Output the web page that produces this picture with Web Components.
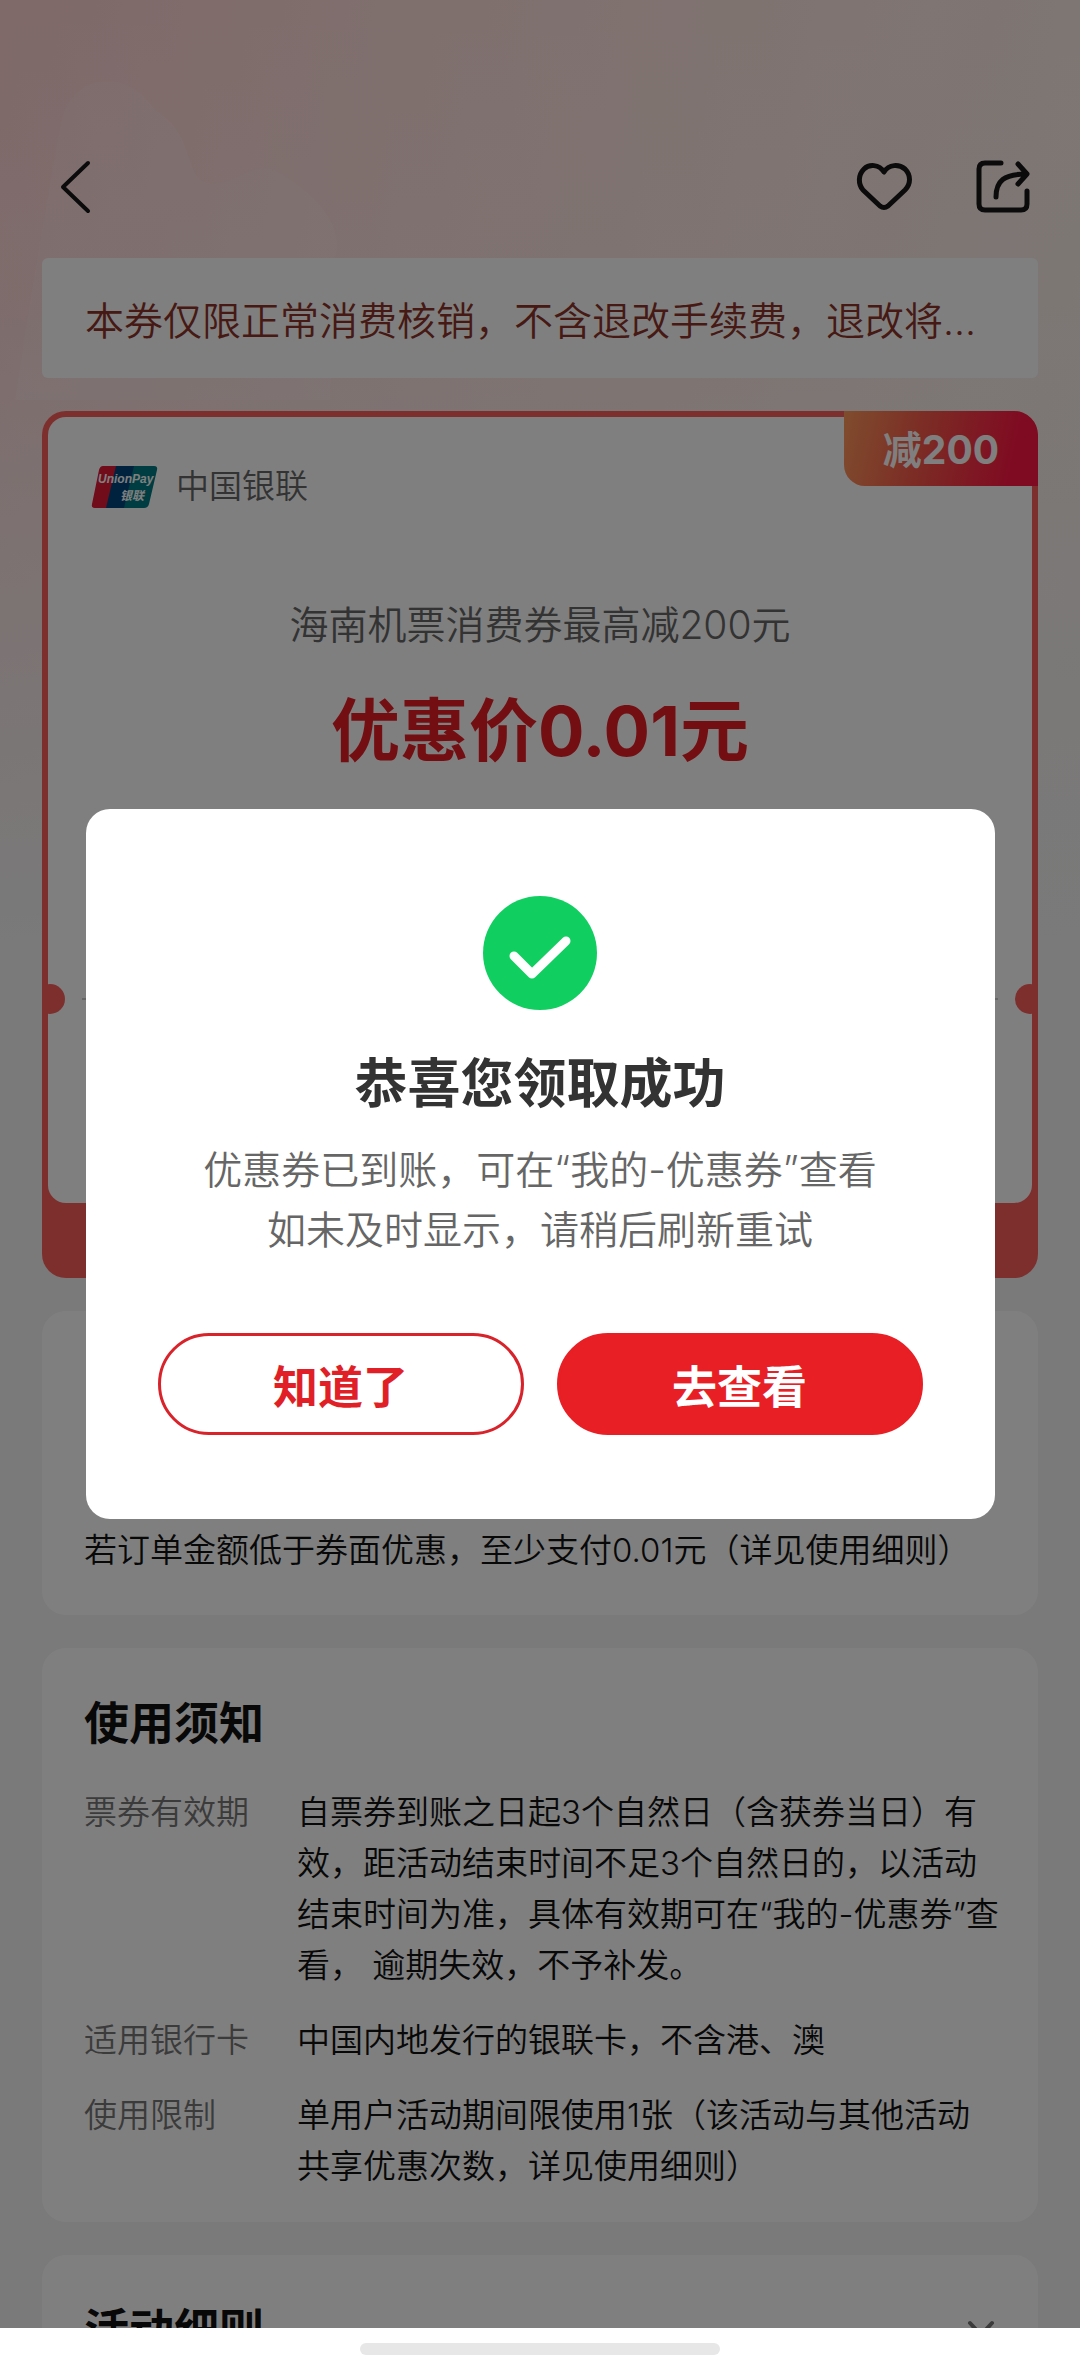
<!DOCTYPE html>
<html lang="zh-CN">
<head>
<meta charset="utf-8">
<meta name="viewport" content="width=device-width, initial-scale=1">
<title>优惠券</title>
<style>
    html, body {
        height: 100%;
        margin: 0;
    }
    body {
        font-family: Inter, "Noto Sans CJK SC", sans-serif;
        font-size: 33px;
        font-weight: 350;
        line-height: 51px;
        color: #111;
    }
</style>
</head>
<body>

<app-screen>
    <page-header></page-header>
    <notice-bar>本券仅限正常消费核销，不含退改手续费，退改将...</notice-bar>
    <coupon-ticket tag="减200">
        <span slot="brand">中国银联</span>
        <span slot="name">海南机票消费券最高减200元</span>
        <span slot="price">优惠价0.01元</span>
    </coupon-ticket>
    <info-card class="rule">若订单金额低于券面优惠，至少支付0.01元（详见使用细则）</info-card>
    <info-card heading="使用须知">
        <info-row label="票券有效期">自票券到账之日起3个自然日（含获券当日）有效，距活动结束时间不足3个自然日的，以活动结束时间为准，具体有效期可在“我的-优惠券”查看， 逾期失效，不予补发。</info-row>
        <info-row label="适用银行卡">中国内地发行的银联卡，不含港、澳</info-row>
        <info-row label="使用限制">单用户活动期间限使用1张（该活动与其他活动共享优惠次数，详见使用细则）</info-row>
    </info-card>
    <info-card heading="活动细则" collapsed></info-card>

    <success-dialog slot="dialog" heading="恭喜您领取成功">
        优惠券已到账，可在“我的-优惠券”查看<br>如未及时显示，请稍后刷新重试
    </success-dialog>
</app-screen>

<script>

// screen: scrolling page, mask with the dialog, system bar at the bottom
class AppScreen extends HTMLElement {
    constructor(){
        super();
        this.attachShadow({ mode: 'open' });
        this.shadowRoot.innerHTML = `
        <style>
            :host{
                display: flex;
                flex-direction: column;
                height: 100vh;
                overflow: hidden;
            }
            .view{
                flex: 1;
                min-height: 0;
                position: relative;
                overflow: hidden;
                background:
                    linear-gradient(180deg, rgba(244,244,244,0) 0, rgba(244,244,244,0.15) 300px, #f4f4f4 940px),
                    linear-gradient(102deg, #ffd2d2 0, #ffe0dc 28%, #ffe9e3 55%, #f9efe9 80%, #f8f0ea 100%);
            }
            .cloud{
                position: absolute;
                top: 0;
                left: 0;
                width: 540px;
                height: 400px;
            }
            .page{
                position: relative;
                display: flex;
                flex-direction: column;
                gap: 33px;
                padding: 0 42px;
            }
            .mask{
                position: absolute;
                inset: 0;
                display: grid;
                place-items: center;
                background: rgba(0,0,0,0.5);
            }
            .bar{
                display: flex;
                justify-content: center;
                height: 33px;
                padding-top: 15px;
                background: white;
            }
            .bar i{
                width: 33.4%;
                height: 12px;
                border-radius: 6px;
                background: #e7e7e7;
            }
        </style>
        <div class="view">
            <svg class="cloud" viewBox="0 0 540 400" fill="#fff" fill-opacity="0.12">
                <path d="M15 400C30 300 50 180 62 120C75 70 130 70 155 110C190 130 185 165 200 180C225 195 250 160 275 170C320 195 345 230 335 258L330 400Z"/>
            </svg>
            <div class="page"><slot></slot></div>
            <div class="mask"><slot name="dialog"></slot></div>
        </div>
        <div class="bar"><i></i></div>
        `;
    }
}

class PageHeader extends HTMLElement {
    constructor(){
        super();
        this.attachShadow({ mode: 'open' });
        this.shadowRoot.innerHTML = `
        <style>
            :host{
                display: flex;
                align-items: center;
                height: 144px;
                padding: 114px 3px 0;
                margin-bottom: -33px;
            }
            button{
                display: flex;
                padding: 0;
                border: 0;
                background: none;
            }
            .back{ margin-right: auto; }
            .like{ margin-right: 60px; }
            svg{
                width: 60px;
                height: 60px;
                fill: none;
                stroke: #161616;
                stroke-width: 5;
                stroke-linecap: round;
                stroke-linejoin: round;
            }
        </style>
        <button class="back" aria-label="返回">
            <svg viewBox="0 0 60 60"><path d="M43 7L18 31L43 55" stroke-width="4"/></svg>
        </button>
        <button class="like" aria-label="收藏">
            <svg viewBox="0 0 60 60"><path d="M29 16C24 8 14 8 9 13C3 19 3 28 8 34L25 50Q29 53 33 50L50 34C56 28 56 19 50 13C44 8 34 8 29 16Z"/></svg>
        </button>
        <button aria-label="分享">
            <svg viewBox="0 0 60 60"><path d="M26 7H10Q4 7 4 13V48Q4 54 10 54H46Q52 54 52 48V35M21 41C21 25 29 18 51 18M43 8L52 18L43 28"/></svg>
        </button>
        `;
    }
}

class NoticeBar extends HTMLElement {
    constructor(){
        super();
        this.attachShadow({ mode: 'open' });
        this.shadowRoot.innerHTML = `
        <style>
            :host{
                display: block;
                padding: 36px 43px 30px;
                border-radius: 6px;
                background: white;
                color: #8c3328;
                font-size: 39px;
                line-height: 54px;
                white-space: nowrap;
                overflow: hidden;
                text-overflow: ellipsis;
            }
        </style>
        <slot></slot>
        `;
    }
}

class CouponTicket extends HTMLElement {
    constructor(){
        super();
        this.attachShadow({ mode: 'open' });
        this.shadowRoot.innerHTML = `
        <style>
            :host{
                display: block;
                position: relative;
                padding: 6px 6px 75px;
                border-radius: 24px;
                background: #fa5f5b;
                overflow: hidden;
            }
            .paper{
                display: flex;
                flex-direction: column;
                height: 786px;
                border-radius: 18px;
                background: white;
            }
            .brand{
                display: flex;
                align-items: center;
                gap: 18px;
                padding: 44px 43px 0;
                color: #666;
            }
            .logo{
                width: 67px;
                height: 42px;
            }
            .name{
                margin-top: 86px;
                text-align: center;
                font-size: 39px;
                line-height: 54px;
                color: #666;
            }
            .price{
                margin-top: 40px;
                text-align: center;
                font-size: 69px;
                line-height: 78px;
                font-weight: 700;
                color: #e71f24;
            }
            .tag{
                position: absolute;
                top: 0;
                right: 0;
                padding: 3px 39px 0;
                border-radius: 0 24px 0 21px;
                background: linear-gradient(102deg, #ff9a5c 0, #f8584a 40%, #ff1744 85%);
                color: white;
                font-size: 39px;
                line-height: 72px;
                font-weight: 700;
            }
            .tear{
                display: flex;
                align-items: center;
                justify-content: space-between;
                height: 30px;
                margin: 214px -13px 0;
            }
            .tear b{
                width: 30px;
                height: 30px;
                border-radius: 50%;
                background: #fa5f5b;
            }
            .tear i{
                flex: 1;
                margin: 0 17px;
                border-top: 2px dashed #ccc;
            }
        </style>
        <div class="paper">
            <div class="brand">
                <svg class="logo" viewBox="0 0 67 42">
                    <clipPath id="card"><path d="M12 0H63Q67 0 66 4L58 38Q57 42 53 42H4Q0 42 1 38L8 4Q9 0 12 0Z"/></clipPath>
                    <g clip-path="url(#card)">
                        <path fill="#e21836" d="M0 0H28L18 42H0Z"/>
                        <path fill="#00447c" d="M25 0H46L36 42H15Z"/>
                        <path fill="#007b84" d="M43 0H67V42H33Z"/>
                    </g>
                    <text x="7" y="17" fill="#fff" font-family="Liberation Sans" font-size="12" font-weight="700" font-style="italic">UnionPay</text>
                    <text x="29" y="34" fill="#fff" font-family="Noto Sans CJK SC" font-size="12" font-weight="700" font-style="italic">银联</text>
                </svg>
                <slot name="brand"></slot>
            </div>
            <div class="name"><slot name="name"></slot></div>
            <div class="price"><slot name="price"></slot></div>
            <div class="tear"><b></b><i></i><b></b></div>
        </div>
        <div class="tag"></div>
        `;
    }

    connectedCallback(){
        this.shadowRoot.querySelector('.tag').textContent = this.getAttribute('tag');
    }
}

class InfoCard extends HTMLElement {
    constructor(){
        super();
        this.attachShadow({ mode: 'open' });
        this.shadowRoot.innerHTML = `
        <style>
            :host{
                display: block;
                padding: 46px 36px 30px 42px;
                border-radius: 24px;
                background: white;
            }
            :host(.rule){ padding-top: 214px; padding-bottom: 39px; }
            header{
                display: flex;
                align-items: center;
                justify-content: space-between;
            }
            h2{
                margin: 0;
                font-size: 45px;
                line-height: 60px;
                font-weight: 700;
            }
            svg{
                width: 30px;
                height: 30px;
                margin-right: 6px;
                fill: none;
                stroke: #777;
                stroke-width: 4;
                stroke-linecap: round;
            }
            .rows{
                display: flex;
                flex-direction: column;
                gap: 24px;
            }
            header + .rows{ margin-top: 33px; }
        </style>
        <div class="rows"><slot></slot></div>
        `;
    }

    connectedCallback(){
        if (this.hasAttribute('heading')){
            const header = document.createElement('header');
            header.innerHTML = '<h2></h2>';
            header.querySelector('h2').textContent = this.getAttribute('heading');
            // folded card gets an arrow
            if (this.hasAttribute('collapsed')){
                header.innerHTML += '<svg viewBox="0 0 30 30"><path d="M4 7L15 19L26 7"/></svg>';
            }
            this.shadowRoot.insertBefore(header, this.shadowRoot.querySelector('.rows'));
        }
    }
}

class InfoRow extends HTMLElement {
    constructor(){
        super();
        this.attachShadow({ mode: 'open' });
        this.shadowRoot.innerHTML = `
        <style>
            :host{
                display: grid;
                grid-template-columns: 213px 1fr;
            }
            .label{ color: #777; }
        </style>
        <div class="label"></div>
        <div><slot></slot></div>
        `;
    }

    connectedCallback(){
        this.shadowRoot.querySelector('.label').textContent = this.getAttribute('label');
    }
}

class SuccessDialog extends HTMLElement {
    constructor(){
        super();
        this.attachShadow({ mode: 'open' });
        this.shadowRoot.innerHTML = `
        <style>
            :host{
                box-sizing: border-box;
                display: flex;
                flex-direction: column;
                align-items: center;
                width: calc(100% - 171px);
                padding: 87px 72px 84px;
                border-radius: 24px;
                background: white;
                text-align: center;
            }
            svg{
                width: 114px;
                height: 114px;
            }
            h1{
                margin: 38px 0 20px;
                font-size: 53px;
                line-height: 72px;
                font-weight: 700;
                color: #333;
            }
            p{
                margin: 0;
                font-size: 39px;
                line-height: 60px;
                color: #666;
            }
            .actions{
                display: grid;
                grid-template-columns: 1fr 1fr;
                gap: 33px;
                align-self: stretch;
                margin-top: 73px;
            }
            button{
                box-sizing: border-box;
                height: 102px;
                border: 3px solid #d8232b;
                border-radius: 51px;
                background: white;
                color: #e01f26;
                font-family: inherit;
                font-size: 45px;
                font-weight: 700;
            }
            button.primary{
                border-color: #e81f25;
                background: #e81f25;
                color: white;
            }
        </style>
        <svg viewBox="0 0 114 114">
            <circle cx="57" cy="57" r="57" fill="#10cf60"/>
            <path d="M31 60L49 78L83 45" fill="none" stroke="#fff" stroke-width="9" stroke-linecap="round" stroke-linejoin="round"/>
        </svg>
        <h1></h1>
        <p><slot></slot></p>
        <div class="actions">
            <button class="close">知道了</button>
            <button class="primary">去查看</button>
        </div>
        `;
    }

    connectedCallback(){
        this.shadowRoot.querySelector('h1').textContent = this.getAttribute('heading');
        this.shadowRoot.querySelector('.close').addEventListener('click', this.#close.bind(this));
    }

    #close(){
        this.remove();
    }
}

customElements.define('app-screen', AppScreen);
customElements.define('page-header', PageHeader);
customElements.define('notice-bar', NoticeBar);
customElements.define('coupon-ticket', CouponTicket);
customElements.define('info-card', InfoCard);
customElements.define('info-row', InfoRow);
customElements.define('success-dialog', SuccessDialog);

</script>
</body>
</html>
